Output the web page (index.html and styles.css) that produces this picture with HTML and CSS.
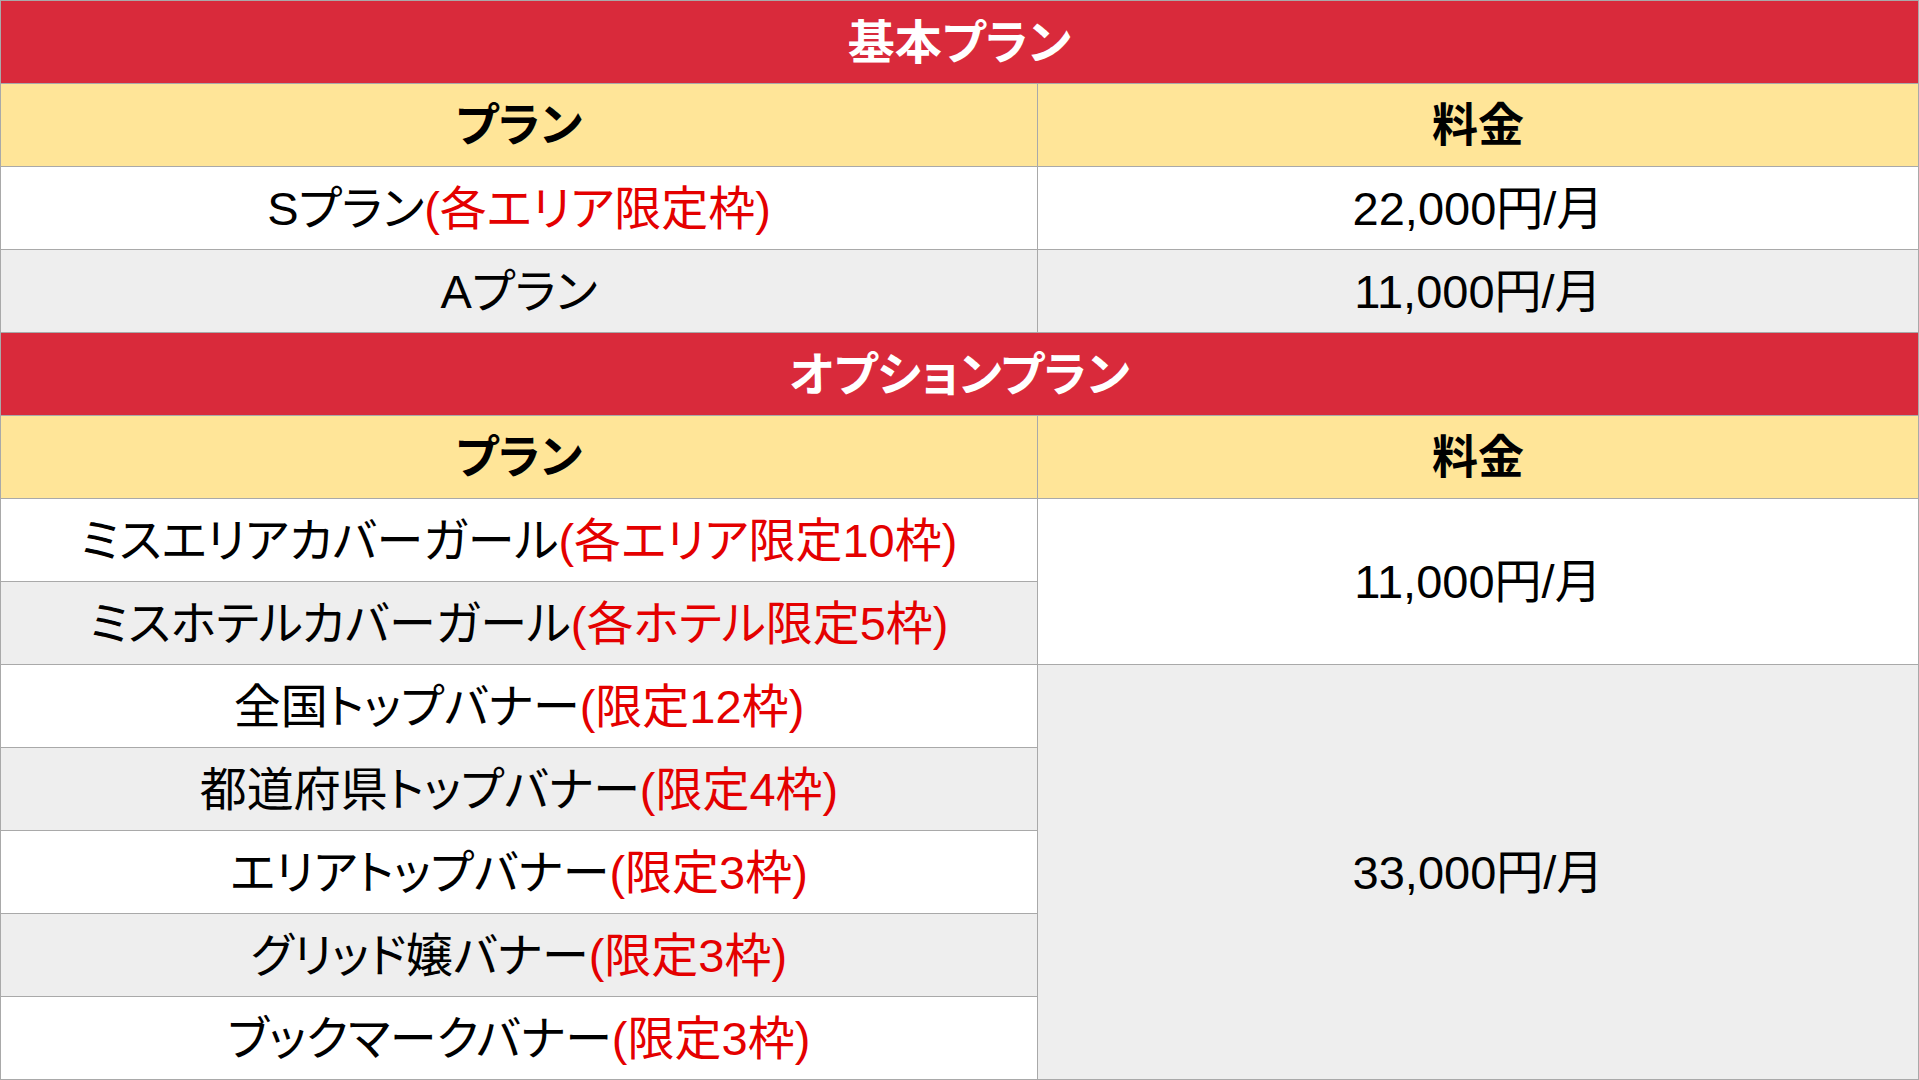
FILE: index.html
```html
<!DOCTYPE html>
<html lang="ja">
<head>
<meta charset="utf-8">
<title>プラン料金</title>
<link rel="stylesheet" href="styles.css">
</head>
<body>
<div class="table">
  <div class="cell head span2">基本プラン</div>
  <div class="cell sub">プラン</div>
  <div class="cell sub">料金</div>
  <div class="cell white">Sプラン<span class="red">(各エリア限定枠)</span></div>
  <div class="cell white">22,000円/月</div>
  <div class="cell grey">Aプラン</div>
  <div class="cell grey">11,000円/月</div>

  <div class="cell head span2">オプションプラン</div>
  <div class="cell sub">プラン</div>
  <div class="cell sub">料金</div>
  <div class="cell white">ミスエリアカバーガール<span class="red">(各エリア限定10枠)</span></div>
  <div class="cell white price-a">11,000円/月</div>
  <div class="cell grey">ミスホテルカバーガール<span class="red">(各ホテル限定5枠)</span></div>
  <div class="cell white">全国トップバナー<span class="red">(限定12枠)</span></div>
  <div class="cell grey price-b">33,000円/月</div>
  <div class="cell grey">都道府県トップバナー<span class="red">(限定4枠)</span></div>
  <div class="cell white">エリアトップバナー<span class="red">(限定3枠)</span></div>
  <div class="cell grey">グリッド嬢バナー<span class="red">(限定3枠)</span></div>
  <div class="cell white">ブックマークバナー<span class="red">(限定3枠)</span></div>
</div>
</body>
</html>
```
FILE: styles.css
```css
html, body {
  margin: 0;
  padding: 0;
  background: #ffffff;
}

body {
  font-family: "Liberation Sans", "Noto Sans CJK JP", sans-serif;
  font-feature-settings: "palt";
  color: #000000;
}

.table {
  width: 1919px;
  box-sizing: border-box;
  display: grid;
  grid-template-columns: 1036px 1fr;
  grid-auto-rows: 82px;
  gap: 1px;
  background: #a9a9a9;
  border: 1px solid #a9a9a9;
}

.cell {
  display: flex;
  align-items: center;
  justify-content: center;
  font-size: 47px;
  line-height: 1;
  white-space: nowrap;
}

.span2 {
  grid-column: 1 / 3;
}

.head {
  background: #d92a3b;
  color: #ffffff;
  font-weight: bold;
  font-size: 47px;
}

.sub {
  background: #ffe598;
  font-weight: bold;
  font-size: 46px;
}

.white {
  background: #ffffff;
}

.grey {
  background: #eeeeee;
}

.red {
  color: #e40000;
}

.price-a {
  grid-column: 2;
  grid-row: span 2;
}

.price-b {
  grid-column: 2;
  grid-row: span 5;
}
```
